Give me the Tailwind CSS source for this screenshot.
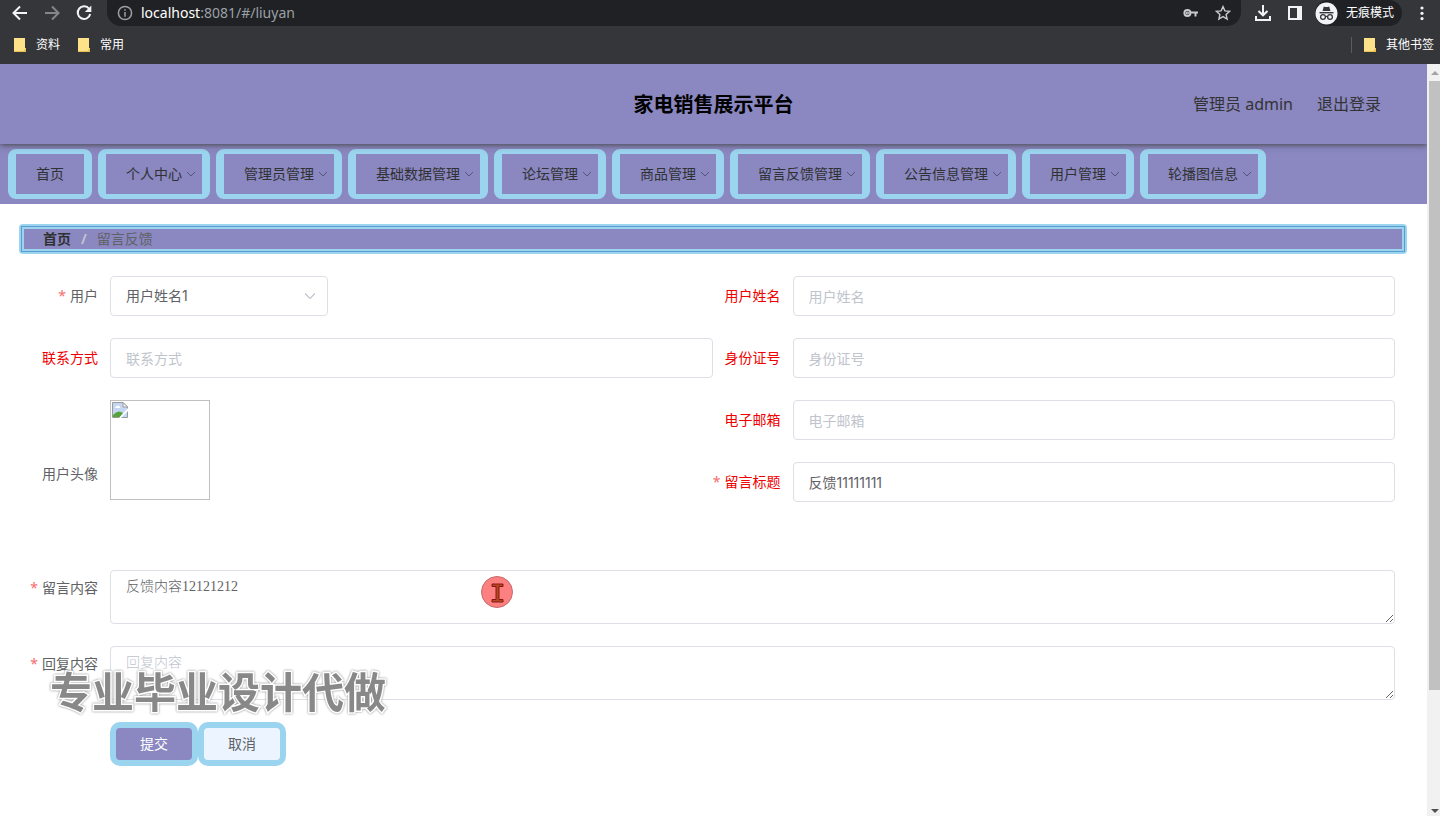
<!DOCTYPE html>
<html lang="zh-CN">
<head>
    <meta charset="UTF-8">
    <meta name="viewport" content="width=device-width, initial-scale=1.0">
    <title>家电销售展示平台</title>
    <script src="https://cdn.jsdelivr.net/npm/@tailwindcss/browser@4"></script>
    <style>
        body {
            font-family: 'Noto Sans', 'Noto Sans CJK SC', sans-serif;
        }
        input, select {
            font-family: Inter, 'Noto Sans CJK SC', sans-serif;
        }
        textarea {
            font-family: 'Liberation Serif', 'Noto Sans CJK SC', sans-serif;
            font-weight: 300;
        }
        .watermark {
            paint-order: stroke fill;
            -webkit-text-stroke: 3px #fff;
            filter: drop-shadow(0 0 1px #888);
        }
    </style>
</head>
<body class="h-screen flex flex-col overflow-hidden bg-white text-sm text-[#606266]">

    <!-- Browser toolbar -->
    <div class="h-16 shrink-0 bg-[#35363a] text-white">
        <div class="flex items-center h-[26px]">
            <button class="ml-3 w-4 h-4" aria-label="后退">
                <svg class="w-4 h-4" viewBox="0 0 16 16" fill="none" stroke="#f1f3f4" stroke-width="2"><path d="M15 8H2M8 1.5L1.5 8L8 14.5"/></svg>
            </button>
            <button class="ml-4 w-4 h-4" aria-label="前进">
                <svg class="w-4 h-4" viewBox="0 0 16 16" fill="none" stroke="#85868a" stroke-width="2"><path d="M1 8H14M8 1.5L14.5 8L8 14.5"/></svg>
            </button>
            <button class="ml-4 w-4 h-4" aria-label="刷新">
                <svg class="w-4 h-4" viewBox="0 0 16 16" fill="none" stroke="#f1f3f4" stroke-width="2"><path d="M13.2 4A6.3 6.3 0 1 0 14.2 9"/><path d="M15.3 0.5V7H8.8Z" fill="#f1f3f4" stroke="none"/></svg>
            </button>
            <div class="ml-[15px] flex-1 h-full flex items-center rounded-b-[14px] bg-[#202124] pl-2.5 pr-2.5">
                <svg class="w-4 h-4" viewBox="0 0 16 16" fill="none" stroke="#9aa0a6" stroke-width="1.5"><circle cx="8" cy="8" r="6.6"/><path d="M8 7V11.8M8 4.2V5.8"/></svg>
                <div class="ml-2 flex-1 text-[14px] leading-5 text-[#9aa0a6]"><span class="text-white">localhost</span>:8081/#/liuyan</div>
                <svg class="w-4 h-4 mr-4" viewBox="0 0 16 16" fill="none" stroke="#c8c9cc" stroke-width="2"><circle cx="4.4" cy="8" r="3"/><path d="M7.5 7.5H15M12.5 7.5V11.5"/><circle cx="4.4" cy="8" r=".6"/></svg>
                <svg class="w-4 h-4" viewBox="0 0 16 16" fill="none" stroke="#c8c9cc" stroke-width="1.4"><path d="M8 1.6L9.9 5.9L14.6 6.3L11.1 9.5L12.1 14.1L8 11.6L3.9 14.1L4.9 9.5L1.4 6.3L6.1 5.9Z"/></svg>
            </div>
            <svg class="ml-3.5 w-4 h-4" viewBox="0 0 16 16" fill="none" stroke="#f1f3f4" stroke-width="2"><path d="M8 0V10M3.5 6L8 10.3L12.5 6M1 11V15H15V11"/></svg>
            <svg class="ml-4 w-4 h-4" viewBox="0 0 16 16"><path fill="#f1f3f4" fill-rule="evenodd" d="M1 1H15V15H1ZM3 3V13H10V3Z"/></svg>
            <button class="ml-3 h-full flex items-center gap-2 rounded-r-[14px] bg-[#202124] rounded-l-[14px] pr-2 text-xs">
                <svg class="w-[23px] h-[23px]" viewBox="0 0 23 23"><circle cx="11.5" cy="11.5" r="11" fill="#f1f3f4"/><path d="M7.5 9L8.8 4.4Q11.5 5.4 14.2 4.4L15.5 9Z" fill="#35363a"/><path d="M4.5 10.7H18.5" stroke="#35363a" stroke-width="1.4"/><g fill="none" stroke="#35363a" stroke-width="1.3"><circle cx="8" cy="15" r="2.4"/><circle cx="15" cy="15" r="2.4"/><path d="M10.4 14.7Q11.5 14 12.6 14.7"/></g></svg>
                无痕模式
            </button>
            <button class="ml-3 mr-2.5 w-4 h-4" aria-label="菜单">
                <svg class="w-4 h-4" viewBox="0 0 16 16" fill="#f1f3f4"><circle cx="8" cy="3" r="1.6"/><circle cx="8" cy="8.3" r="1.6"/><circle cx="8" cy="13.6" r="1.6"/></svg>
            </button>
        </div>
        <div class="flex items-center h-[38px] text-xs pl-3.5 pr-1.5">
            <svg class="w-3 h-[14px]" viewBox="0 0 12 14"><path d="M0 0H11V10H12V14H0Z" fill="#fde28a"/><path d="M0 13H9L12 10V14H0Z" fill="#e9c251"/></svg>
            <a href="#" class="ml-2.5">资料</a>
            <svg class="ml-[18px] w-3 h-[14px]" viewBox="0 0 12 14"><path d="M0 0H11V10H12V14H0Z" fill="#fde28a"/><path d="M0 13H9L12 10V14H0Z" fill="#e9c251"/></svg>
            <a href="#" class="ml-2.5">常用</a>
            <div class="ml-auto h-4 border-l border-[#5b5c60]"></div>
            <svg class="ml-3 w-3 h-[14px]" viewBox="0 0 12 14"><path d="M0 0H11V10H12V14H0Z" fill="#fde28a"/><path d="M0 13H9L12 10V14H0Z" fill="#e9c251"/></svg>
            <a href="#" class="ml-2.5">其他书签</a>
        </div>
    </div>

    <div class="flex flex-1 min-h-0">
        <div class="flex-1 min-w-0 relative overflow-hidden">

            <!-- Header -->
            <header class="relative h-20 grid grid-cols-3 items-center bg-[#8a87c1] shadow-[0_1px_6px_#444]">
                <h1 class="col-start-2 pt-0.5 text-center text-xl font-bold text-black">家电销售展示平台</h1>
                <div class="flex justify-end gap-6 pr-[46px] text-base text-[#333]">
                    <span>管理员 admin</span>
                    <a href="#">退出登录</a>
                </div>
            </header>

            <!-- Menu -->
            <nav class="h-[60px] flex items-center gap-1.5 pl-2 bg-[#8a87c1] text-[#303133]">
                <a href="#" class="h-[50px] flex items-center px-5 border-x-8 border-y-5 border-[#9bd4ee] rounded-lg">首页</a>
                <a href="#" class="h-[50px] flex items-center gap-1 pl-5 pr-1.5 border-x-8 border-y-5 border-[#9bd4ee] rounded-lg">个人中心<svg class="w-2.5 h-2.5" viewBox="0 0 10 10" fill="none" stroke="#55547c"><path d="M1 3L5 7L9 3"/></svg></a>
                <a href="#" class="h-[50px] flex items-center gap-1 pl-5 pr-1.5 border-x-8 border-y-5 border-[#9bd4ee] rounded-lg">管理员管理<svg class="w-2.5 h-2.5" viewBox="0 0 10 10" fill="none" stroke="#55547c"><path d="M1 3L5 7L9 3"/></svg></a>
                <a href="#" class="h-[50px] flex items-center gap-1 pl-5 pr-1.5 border-x-8 border-y-5 border-[#9bd4ee] rounded-lg">基础数据管理<svg class="w-2.5 h-2.5" viewBox="0 0 10 10" fill="none" stroke="#55547c"><path d="M1 3L5 7L9 3"/></svg></a>
                <a href="#" class="h-[50px] flex items-center gap-1 pl-5 pr-1.5 border-x-8 border-y-5 border-[#9bd4ee] rounded-lg">论坛管理<svg class="w-2.5 h-2.5" viewBox="0 0 10 10" fill="none" stroke="#55547c"><path d="M1 3L5 7L9 3"/></svg></a>
                <a href="#" class="h-[50px] flex items-center gap-1 pl-5 pr-1.5 border-x-8 border-y-5 border-[#9bd4ee] rounded-lg">商品管理<svg class="w-2.5 h-2.5" viewBox="0 0 10 10" fill="none" stroke="#55547c"><path d="M1 3L5 7L9 3"/></svg></a>
                <a href="#" class="h-[50px] flex items-center gap-1 pl-5 pr-1.5 border-x-8 border-y-5 border-[#9bd4ee] rounded-lg">留言反馈管理<svg class="w-2.5 h-2.5" viewBox="0 0 10 10" fill="none" stroke="#55547c"><path d="M1 3L5 7L9 3"/></svg></a>
                <a href="#" class="h-[50px] flex items-center gap-1 pl-5 pr-1.5 border-x-8 border-y-5 border-[#9bd4ee] rounded-lg">公告信息管理<svg class="w-2.5 h-2.5" viewBox="0 0 10 10" fill="none" stroke="#55547c"><path d="M1 3L5 7L9 3"/></svg></a>
                <a href="#" class="h-[50px] flex items-center gap-1 pl-5 pr-1.5 border-x-8 border-y-5 border-[#9bd4ee] rounded-lg">用户管理<svg class="w-2.5 h-2.5" viewBox="0 0 10 10" fill="none" stroke="#55547c"><path d="M1 3L5 7L9 3"/></svg></a>
                <a href="#" class="h-[50px] flex items-center gap-1 pl-5 pr-1.5 border-x-8 border-y-5 border-[#9bd4ee] rounded-lg">轮播图信息<svg class="w-2.5 h-2.5" viewBox="0 0 10 10" fill="none" stroke="#55547c"><path d="M1 3L5 7L9 3"/></svg></a>
            </nav>

            <main class="px-5 pt-5">
                <!-- Breadcrumb -->
                <div class="-ml-px rounded-sm border-2 border-[#9bd4ee]">
                    <div class="h-[26px] flex items-center gap-2.5 pl-[21px] bg-[#8a87c1] border border-[#5c9bd0] shadow-[inset_0_0_0_2px_#9bd4ee]">
                        <a href="#" class="font-bold text-[#303133]">首页</a>
                        <span class="font-bold text-[#c0c4cc]">/</span>
                        <span>留言反馈</span>
                    </div>
                </div>

                <!-- Form -->
                <form class="pl-2.5 pr-3 pt-[22px]">
                    <div class="grid grid-cols-2">
                        <div class="flex flex-col gap-[22px]">
                            <div class="flex">
                                <label for="user" class="w-20 pr-3 text-right leading-10"><span class="text-[#f56c6c] mr-1">*</span>用户</label>
                                <div class="relative">
                                    <select id="user" class="appearance-none w-[218px] h-10 px-[15px] border border-[#dcdfe6] rounded bg-white">
                                        <option>用户姓名1</option>
                                    </select>
                                    <svg class="absolute right-3 top-3.5 w-3 h-3 pointer-events-none" viewBox="0 0 12 12" fill="none" stroke="#c0c4cc" stroke-width="1.2"><path d="M1 3.5L6 8.5L11 3.5"/></svg>
                                </div>
                            </div>
                            <div class="flex">
                                <label for="phone" class="w-20 pr-3 text-right leading-10 text-[#f00000]">联系方式</label>
                                <input id="phone" type="text" placeholder="联系方式" class="flex-1 h-10 px-[15px] border border-[#dcdfe6] rounded placeholder:text-[#c0c4cc]">
                            </div>
                            <div class="flex">
                                <span class="w-20 pr-3 pt-[54px] text-right leading-10">用户头像</span>
                                <div class="w-[100px] h-[100px] p-px border border-[#c0c0c0]">
                                    <svg class="w-4 h-4" viewBox="0 0 16 16"><path d="M.5 .5H11L15.500 5V15.500H.5Z" fill="#c3d7f4" stroke="#9a9a9a"/><path d="M11 .5V5H15.500Z" fill="#fff" stroke="#9a9a9a"/><path d="M3 6Q3 4 5 4Q7 2.500 8 5Q9 6 7 6Z" fill="#fff"/><path d="M1 15V13Q6 7 11 11L8 15Z" fill="#55a33a"/><path d="M16 6V9L9 16H7Z" fill="#fff"/></svg>
                                </div>
                            </div>
                        </div>
                        <div class="flex flex-col gap-[22px]">
                            <div class="flex">
                                <label for="name" class="w-20 pr-3 text-right leading-10 text-[#f00000]">用户姓名</label>
                                <input id="name" type="text" placeholder="用户姓名" class="flex-1 h-10 px-[15px] border border-[#dcdfe6] rounded placeholder:text-[#c0c4cc]">
                            </div>
                            <div class="flex">
                                <label for="idcard" class="w-20 pr-3 text-right leading-10 text-[#f00000]">身份证号</label>
                                <input id="idcard" type="text" placeholder="身份证号" class="flex-1 h-10 px-[15px] border border-[#dcdfe6] rounded placeholder:text-[#c0c4cc]">
                            </div>
                            <div class="flex">
                                <label for="email" class="w-20 pr-3 text-right leading-10 text-[#f00000]">电子邮箱</label>
                                <input id="email" type="text" placeholder="电子邮箱" class="flex-1 h-10 px-[15px] border border-[#dcdfe6] rounded placeholder:text-[#c0c4cc]">
                            </div>
                            <div class="flex">
                                <label for="subject" class="w-20 pr-3 text-right leading-10 text-[#f00000] whitespace-nowrap"><span class="text-[#f56c6c] mr-1">*</span>留言标题</label>
                                <input id="subject" type="text" value="反馈11111111" class="flex-1 h-10 px-[15px] border border-[#dcdfe6] rounded">
                            </div>
                        </div>
                    </div>

                    <div class="mt-[68px] flex">
                        <label for="content" class="w-20 pr-3 text-right leading-9 whitespace-nowrap"><span class="text-[#f56c6c] mr-1">*</span>留言内容</label>
                        <textarea id="content" class="flex-1 h-[54px] px-[15px] py-[5px] leading-[21px] border border-[#dcdfe6] rounded resize-y">反馈内容12121212</textarea>
                    </div>
                    <div class="mt-[22px] flex">
                        <label for="reply" class="w-20 pr-3 text-right leading-9 whitespace-nowrap"><span class="text-[#f56c6c] mr-1">*</span>回复内容</label>
                        <textarea id="reply" placeholder="回复内容" class="flex-1 h-[54px] px-[15px] py-[5px] leading-[21px] border border-[#dcdfe6] rounded resize-y placeholder:text-[#c0c4cc]"></textarea>
                    </div>
                    <div class="mt-[22px] pl-20 flex">
                        <button type="button" class="rounded-[10px] bg-[#9bd4ee] p-1.5"><span class="flex items-center justify-center w-[76px] h-8 rounded bg-[#8a87c1] text-white">提交</span></button>
                        <button type="button" class="rounded-[10px] bg-[#9bd4ee] p-1.5"><span class="flex items-center justify-center w-[76px] h-8 rounded bg-[#ecf5ff]">取消</span></button>
                    </div>
                </form>
            </main>

            <!-- Mouse highlight -->
            <div class="absolute left-[481px] top-[512px] w-8 h-8 pointer-events-none">
                <svg class="w-8 h-8" viewBox="0 0 32 32"><circle cx="16" cy="16" r="15.500" fill="#fd8080" stroke="#c46a70"/><path d="M11 8H22V10.500H18V23.500H22V26H11V23.500H15V10.500H11Z" fill="#b04a20" stroke="#8c1414"/></svg>
            </div>

            <!-- Watermark -->
            <div class="watermark absolute left-[50px] top-[598px] text-[42px] leading-[60px] font-bold text-[#888] whitespace-nowrap pointer-events-none">专业毕业设计代做</div>
        </div>

        <!-- Scrollbar -->
        <div class="w-[13px] flex flex-col items-center bg-[#f1f1f1] pl-0.5">
            <svg class="w-full h-[17px] shrink-0" viewBox="0 0 11 17"><path d="M2 11L6 7L10 11Z" fill="#a3a3a3"/></svg>
            <div class="w-full h-[81%] bg-[#c1c1c1]"></div>
            <svg class="mt-auto w-full h-[10px] shrink-0" viewBox="0 0 11 10"><path d="M2 3L6 7L10 3Z" fill="#505050"/></svg>
        </div>
    </div>

</body>
</html>
